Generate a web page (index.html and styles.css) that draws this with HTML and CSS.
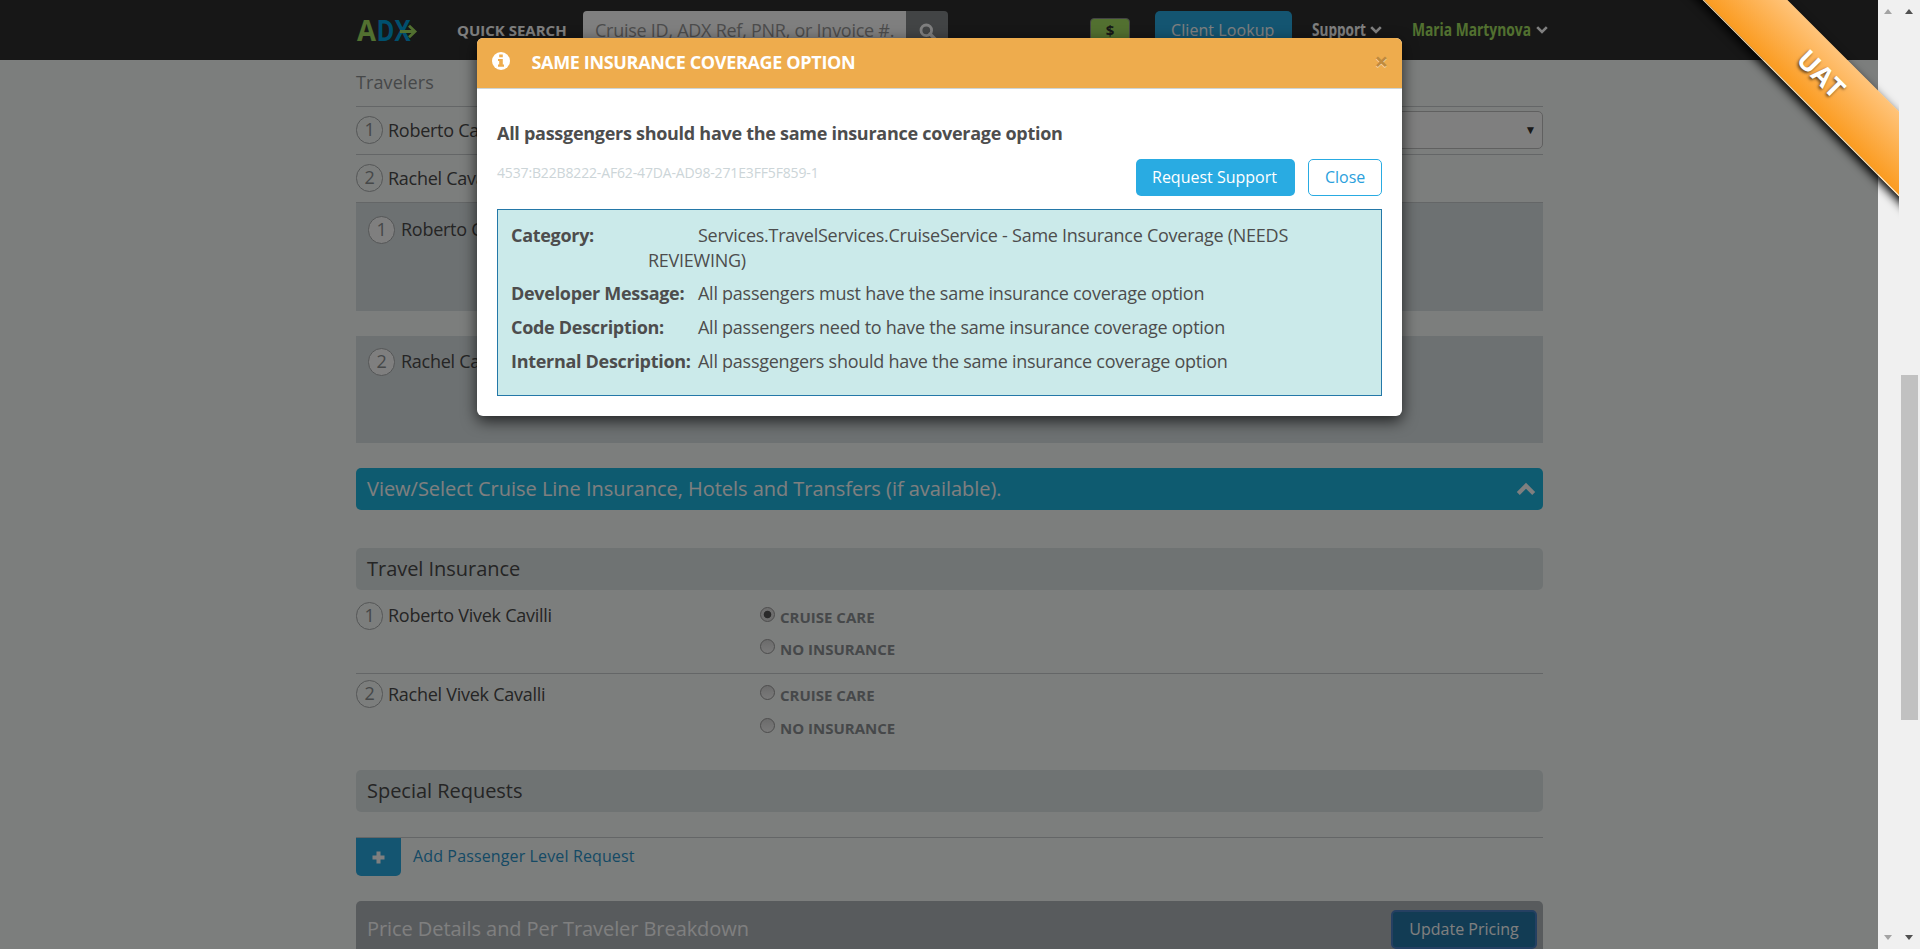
FILE: index.html
```html
<!DOCTYPE html>
<html lang="en">
<head>
<meta charset="utf-8">
<title>ADX Booking</title>
<link rel="stylesheet" href="styles.css">
</head>
<body>
<div class="app">
  <div class="page">
    <header class="topbar">
      <div class="container topbar-row">
        <svg class="logo" width="62" height="24" viewBox="0 0 62 24">
          <text class="logo-a" x="1" y="22" textLength="19" lengthAdjust="spacingAndGlyphs">A</text>
          <text class="logo-dx" x="20.500" y="22" textLength="34" lengthAdjust="spacingAndGlyphs">DX</text>
          <path d="M44 12.500H59M53 6.800l6 5.700-6 5.700" fill="none" stroke="#a4e060" stroke-width="2.800"/>
        </svg>
        <span class="quick">QUICK SEARCH</span>
        <div class="search">
          <span class="search-input">Cruise ID, ADX Ref, PNR, or Invoice #.</span>
          <span class="search-btn"><svg width="18" height="18" viewBox="0 0 18 18"><circle cx="7.300" cy="7.300" r="5.300" fill="none" stroke="currentColor" stroke-width="2.800"/><path d="M11 11l5 5" stroke="currentColor" stroke-width="3.400" stroke-linecap="round"/></svg></span>
        </div>
        <span class="money">$</span>
        <span class="btn lookup">Client Lookup</span>
        <div class="menu support"><svg width="55" height="26"><text x="0" y="19" textLength="54" lengthAdjust="spacingAndGlyphs">Support</text></svg><svg class="chev" width="12" height="8" viewBox="0 0 12 8"><path d="M1.200 1.200L6 6l4.800-4.800"/></svg></div>
        <div class="menu user"><svg width="119" height="26"><text x="0" y="19" textLength="119" lengthAdjust="spacingAndGlyphs">Maria Martynova</text></svg><svg class="chev" width="12" height="8" viewBox="0 0 12 8"><path d="M1.200 1.200L6 6l4.800-4.800"/></svg></div>
      </div>
    </header>
    <main class="container">
      <div class="list-title">Travelers</div>
      <div class="row"><span class="num">1</span><span>Roberto Cavilli</span><span class="select">▼</span></div>
      <div class="row"><span class="num">2</span><span>Rachel Cavalli</span></div>
      <div class="panel first"><span class="num">1</span><span>Roberto Cavilli</span></div>
      <div class="panel second"><span class="num">2</span><span>Rachel Cavalli</span></div>
      <div class="bar blue"><span>View/Select Cruise Line Insurance, Hotels and Transfers (if available).</span><svg width="20" height="14" viewBox="0 0 20 14"><path d="M2.300 11.500L10 3.800l7.700 7.700" fill="none" stroke="currentColor" stroke-width="4.200"/></svg></div>
      <div class="bar"><span>Travel Insurance</span></div>
      <div class="ins one">
        <div class="who"><span class="num">1</span><span>Roberto Vivek Cavilli</span></div>
        <div class="opts"><label><i class="radio on"></i>CRUISE CARE</label><label><i class="radio"></i>NO INSURANCE</label></div>
      </div>
      <div class="ins two">
        <div class="who"><span class="num">2</span><span>Rachel Vivek Cavalli</span></div>
        <div class="opts"><label><i class="radio"></i>CRUISE CARE</label><label><i class="radio"></i>NO INSURANCE</label></div>
      </div>
      <div class="bar"><span>Special Requests</span></div>
      <div class="add"><span class="plus"><svg width="13" height="13" viewBox="0 0 13 13"><path d="M6.500 0.500v12M0.500 6.500h12" stroke="currentColor" stroke-width="4"/></svg></span><a>Add Passenger Level Request</a></div>
      <div class="price"><span>Price Details and Per Traveler Breakdown</span><span class="update">Update Pricing</span></div>
    </main>
    <div class="backdrop"></div>
  </div>
  <div class="track"><i class="up"></i><i class="down"></i></div>
  <div class="track dark"><i class="up"></i><i class="thumb"></i><i class="down"></i></div>
</div>

<section class="modal">
  <header class="modal-head">
    <svg width="18" height="18" viewBox="0 0 18 18"><circle cx="9" cy="9" r="9" fill="#fff"/><path d="M7.200 2.600h3.600v2.700H7.200zM6 7h4.800v5.600H12v2.200H6v-2.200h1.200V9.100H6z" fill="#eeac4d"/></svg>
    <h1>SAME INSURANCE COVERAGE OPTION</h1>
    <span class="x">×</span>
  </header>
  <div class="modal-body">
    <h2>All passgengers should have the same insurance coverage option</h2>
    <div class="actions"><span class="code">4537:B22B8222-AF62-47DA-AD98-271E3FF5F859-1</span><span class="btn ask">Request Support</span><span class="btn close">Close</span></div>
    <dl class="details">
      <div><dt>Category:</dt><dd>Services.TravelServices.CruiseService - Same Insurance Coverage (NEEDS REVIEWING)</dd></div>
      <div><dt>Developer Message:</dt><dd>All passengers must have the same insurance coverage option</dd></div>
      <div><dt>Code Description:</dt><dd>All passengers need to have the same insurance coverage option</dd></div>
      <div><dt>Internal Description:</dt><dd>All passgengers should have the same insurance coverage option</dd></div>
    </dl>
  </div>
</section>
<div class="corner"><div class="ribbon">UAT</div></div>
</body>
</html>
```
FILE: styles.css
```css
* { box-sizing: border-box; }
html, body { margin: 0; height: 949px; overflow: hidden; }
body { font: 18px/25px "Open Sans", "Noto Sans", sans-serif; color: #4a4a4a; letter-spacing: -.26px; }
h1, h2, dl, dd { margin: 0; }
svg { display: block; flex: none; overflow: visible; }
.app { display: flex; height: 949px; }
.page { position: relative; width: 1878px; height: 949px; overflow: hidden; background: #f9fcfa; }
.backdrop { position: absolute; inset: 0; background: rgba(0, 0, 0, .5); }
.container { width: 1187px; margin-left: 356px; }

.topbar { height: 60px; background: #2e2e2e; }
.topbar-row { display: flex; align-items: flex-start; white-space: nowrap; }
.topbar-row > * { flex: none; }
.logo { margin-top: 19px; }
.logo text { font-weight: 700; font-size: 28px; letter-spacing: 0; }
.logo-a { fill: #a4e060; }
.logo-dx { fill: #00a0dc; }
.quick { margin: 18px 0 0 39px; width: 126px; font-weight: 700; font-size: 15px; letter-spacing: 0; color: #fff; }
.search { display: flex; width: 365px; height: 40px; margin-top: 11px; border-radius: 4px; overflow: hidden; }
.search-input { width: 323px; padding: 7px 12px; background: #fff; color: #999; }
.search-btn { width: 42px; padding: 12px 13px; background: #85898b; color: #fff; }
.money { width: 40px; height: 26px; margin: 18px 0 0 142px; border: 1px solid #888; border-radius: 4px; background: #a4e060; color: #2e2e2e; font-weight: 700; font-size: 15px; line-height: 23px; text-align: center; }
.btn { height: 37px; padding: 0 16px; border-radius: 5px; font-size: 16px; letter-spacing: 0; line-height: 36px; white-space: nowrap; }
.lookup { width: 137px; margin: 11px 0 0 25px; background: #29abe2; color: #fff; line-height: 38px; letter-spacing: .08px; }
.menu { display: flex; align-items: center; gap: 3px; height: 26px; margin-top: 17px; }
.menu text { font-weight: 700; font-size: 18px; letter-spacing: 0; fill: currentColor; }
.support { margin-left: 20px; color: #fff; }
.user { margin-left: 30px; color: #a4e060; gap: 5px; }
.chev { fill: none; stroke: #fff; stroke-width: 2.6; }

.list-title { height: 47px; padding-top: 10px; border-bottom: 1px solid #c9cdce; color: #8c9092; letter-spacing: .1px; }
.row { display: flex; align-items: center; gap: 5px; height: 48px; border-bottom: 1px solid #c9cdce; padding-bottom: 1px; }
.num { flex: none; width: 27px; height: 28px; border: 1px solid #a9adae; border-radius: 14px; text-align: center; color: #8c9092; line-height: 25px; }
.select { width: 300px; height: 38px; margin-left: auto; padding-right: 6px; border: 1px solid #c0c0c0; border-radius: 5px; background: #fff; font-size: 12px; line-height: 36px; text-align: right; color: #333; }
.panel { display: flex; gap: 6px; padding: 13px 12px; background: #dbe2e4; }
.panel .num { background: #fff; }
.first { height: 108px; margin-bottom: 25px; }
.first span:last-child { padding-top: 1px; }
.second { height: 107px; margin-bottom: 25px; padding-top: 12px; }
.second span:last-child { padding-top: 1px; }
.bar { display: flex; justify-content: space-between; align-items: center; height: 42px; padding: 0 11px; border-radius: 5px; background: #dfe6e7; font-size: 20px; letter-spacing: -.03px; }
.bar span { padding-bottom: 2px; }
.blue { margin-bottom: 38px; padding-right: 7px; background: #1db6e0; color: #fff; }
.ins { display: flex; }
.ins.one { height: 84px; padding-top: 12px; border-bottom: 1px solid #c9cdce; }
.ins.two { height: 96px; padding-top: 6px; }
.who { display: flex; gap: 5px; width: 404px; }
.who span:last-child { padding-top: 1px; }
.two .who span:last-child { padding-top: 2px; }
.opts { display: flex; flex-direction: column; gap: 7px; padding-top: 5px; }
.two .opts { gap: 8px; }
.opts label { display: flex; gap: 5px; height: 25px; font-size: 15px; font-weight: 700; letter-spacing: 0; line-height: 20px; color: #8c9194; }
.radio { width: 15px; height: 15px; border: 1px solid #999; border-radius: 50%; background: linear-gradient(#d8d8d8, #f4f4f4); }
.radio.on { background: radial-gradient(circle, #555 0 3.4px, #ddd 4.2px); }
.add { display: flex; height: 39px; margin: 25px 0; border-top: 1px solid #c9cdce; font-size: 16px; letter-spacing: .13px; }
.plus { display: grid; place-items: center; width: 45px; height: 38px; border-radius: 0 0 5px 5px; background: #29abe2; color: #fff; }
.add a { margin: 6px 0 0 12px; color: #2b94cb; }
.price { display: flex; justify-content: space-between; height: 60px; padding: 9px 6px 0 11px; border-radius: 5px; background: #b0b6bb; font-size: 20px; line-height: 38px; letter-spacing: -.07px; color: #fff; }
.update { width: 146px; height: 39px; border: 2px solid #4a80c4; border-radius: 5px; background: #2478a8; font-size: 16px; line-height: 35px; letter-spacing: 0; text-align: center; }

.track { position: relative; width: 21px; height: 949px; background: #f0f0f0; color: #a3a3a3; }
.dark { color: #505050; }
.track i { position: absolute; left: 6px; border: 4.5px solid transparent; }
.track .up { top: 5px; border-bottom: 5px solid currentColor; }
.track .down { top: 935px; border-top: 5px solid currentColor; }
.track .thumb { left: 2px; top: 375px; width: 17px; height: 345px; border: 0; background: #c1c1c1; }

.modal { position: absolute; left: 477px; top: 38px; width: 925px; height: 378px; border-radius: 6px; background: #fff; box-shadow: 0 5px 15px rgba(0, 0, 0, .7); overflow: hidden; }
.modal-head { display: flex; height: 51px; padding: 14px 14px 14px 15px; background: #eeac4d; border-bottom: 1px solid #ccd5d8; color: #fff; }
.modal-head h1 { margin: -2px auto 0 21.5px; font-size: 18px; line-height: 25px; font-weight: 700; letter-spacing: -.34px; }
.x { margin-top: -4px; color: #bf8a3e; font-size: 24px; font-weight: 700; text-shadow: 0 1px 0 #fff8; }
.modal-body { padding: 32px 20px 0; }
h2 { font-size: 18px; line-height: 25px; font-weight: 700; color: #4d4d4d; letter-spacing: -.28px; }
.actions { display: flex; height: 63px; padding-top: 13px; }
.code { margin: 1px auto 0 0; font-size: 14px; line-height: 25px; letter-spacing: -.15px; color: #ccd5d8; }
.ask { width: 159px; margin-right: 13px; background: #29abe2; color: #fff; font-weight: 500; }
.close { width: 74px; border: 1px solid #29abe2; color: #2b9fdc; line-height: 34px; }
.details { height: 187px; padding: 13px; border: 1px solid #2478a8; background: #cbeaea; color: #4d4d4d; }
.details div { display: flex; margin-bottom: 9px; }
.details div:first-child { margin-bottom: 8px; }
dt { width: 137px; font-weight: 700; white-space: nowrap; letter-spacing: -.3px; }
dd { flex: 1; text-indent: 50px; padding-right: 80px; }

.corner { position: absolute; left: 1650px; top: 0; width: 249px; height: 260px; overflow: hidden; }
.ribbon { position: absolute; left: -30px; top: 45px; width: 400px; height: 60px; transform: rotate(45deg); border-bottom: 1px solid #ffe0b0; background: linear-gradient(#ffc47a, #fb9b20); box-shadow: 0 4px 10px #000; color: #fff; font-size: 27px; font-weight: 700; line-height: 56px; letter-spacing: 0; text-align: center; text-shadow: 0 2px 3px rgba(0, 0, 0, .6); }
```
